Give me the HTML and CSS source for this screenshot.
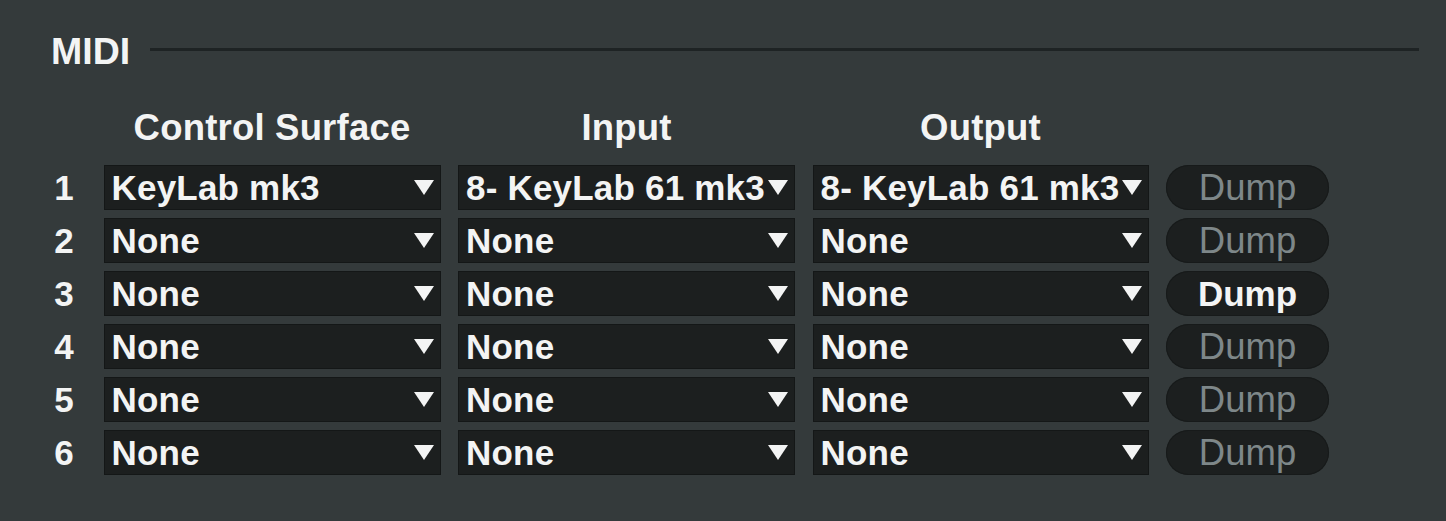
FILE: index.html
```html
<!DOCTYPE html>
<html>
<head>
<meta charset="utf-8">
<link rel="stylesheet" href="styles.css">
</head>
<body>
<section class="panel">
  <div class="section-head">
    <span class="section-title">MIDI</span>
    <span class="section-rule"></span>
  </div>
  <div class="grid">
    <div class="colhead blank"></div>
    <div class="colhead">Control Surface</div>
    <div class="colhead">Input</div>
    <div class="colhead">Output</div>
    <div class="colhead blank"></div>

    <div class="num">1</div>
    <div class="dd"><span class="dd-text">KeyLab mk3</span><span class="arrow"></span></div>
    <div class="dd"><span class="dd-text">8- KeyLab 61 mk3</span><span class="arrow"></span></div>
    <div class="dd"><span class="dd-text">8- KeyLab 61 mk3</span><span class="arrow"></span></div>
    <div class="dump off">Dump</div>

    <div class="num">2</div>
    <div class="dd"><span class="dd-text">None</span><span class="arrow"></span></div>
    <div class="dd"><span class="dd-text">None</span><span class="arrow"></span></div>
    <div class="dd"><span class="dd-text">None</span><span class="arrow"></span></div>
    <div class="dump off">Dump</div>

    <div class="num">3</div>
    <div class="dd"><span class="dd-text">None</span><span class="arrow"></span></div>
    <div class="dd"><span class="dd-text">None</span><span class="arrow"></span></div>
    <div class="dd"><span class="dd-text">None</span><span class="arrow"></span></div>
    <div class="dump on">Dump</div>

    <div class="num">4</div>
    <div class="dd"><span class="dd-text">None</span><span class="arrow"></span></div>
    <div class="dd"><span class="dd-text">None</span><span class="arrow"></span></div>
    <div class="dd"><span class="dd-text">None</span><span class="arrow"></span></div>
    <div class="dump off">Dump</div>

    <div class="num">5</div>
    <div class="dd"><span class="dd-text">None</span><span class="arrow"></span></div>
    <div class="dd"><span class="dd-text">None</span><span class="arrow"></span></div>
    <div class="dd"><span class="dd-text">None</span><span class="arrow"></span></div>
    <div class="dump off">Dump</div>

    <div class="num">6</div>
    <div class="dd"><span class="dd-text">None</span><span class="arrow"></span></div>
    <div class="dd"><span class="dd-text">None</span><span class="arrow"></span></div>
    <div class="dd"><span class="dd-text">None</span><span class="arrow"></span></div>
    <div class="dump off">Dump</div>
  </div>
</section>
</body>
</html>
```
FILE: styles.css
```css
html, body {
  margin: 0;
  padding: 0;
  background: #343a3b;
}
body {
  width: 1446px;
  height: 521px;
  overflow: hidden;
  font-family: "Liberation Sans", Arial, sans-serif;
  font-weight: bold;
  color: #f3f4f4;
}
.panel {
  padding: 31px 0 0 0;
}
.section-head {
  display: flex;
  align-items: flex-start;
  padding-left: 51px;
  width: 1368px;
  gap: 20px;
}
.section-title {
  font-size: 37.5px;
  line-height: 40px;
}
.section-rule {
  flex: 1;
  height: 3px;
  margin-top: 17px;
  background: #1e2324;
}
.grid {
  display: grid;
  grid-template-columns: 44px 337px 337px 336px 163px;
  grid-template-rows: 49px;
  grid-auto-rows: 45px;
  column-gap: 17.5px;
  row-gap: 8px;
  padding-left: 42px;
  margin-top: 37px;
  font-size: 35px;
}
.colhead {
  line-height: 40px;
  text-align: center;
  font-size: 36.5px;
  letter-spacing: 0.2px;
}
.num {
  line-height: 45px;
  text-align: center;
}
.dd {
  display: flex;
  align-items: center;
  background: #1c1f1f;
  box-shadow: inset 0 0 0 1px #141717;
  padding: 0 7px 0 8px;
  overflow: hidden;
}
.dd-text {
  flex: 1;
  min-width: 0;
  line-height: 45px;
  white-space: nowrap;
  overflow: hidden;
  letter-spacing: 0.2px;
}
.arrow {
  flex: none;
  width: 0;
  height: 0;
  border-left: 10px solid transparent;
  border-right: 10px solid transparent;
  border-top: 15px solid #f3f4f4;
  margin-left: 1px;
}
.dump {
  border-radius: 23px;
  background: #1c1f1f;
  box-shadow: inset 0 0 0 1px #171a1a;
  text-align: center;
  line-height: 45px;
}
.dump.off {
  font-weight: normal;
  font-size: 36.5px;
  color: #7e8789;
}
.dump.on {
  color: #f3f4f4;
}
```
